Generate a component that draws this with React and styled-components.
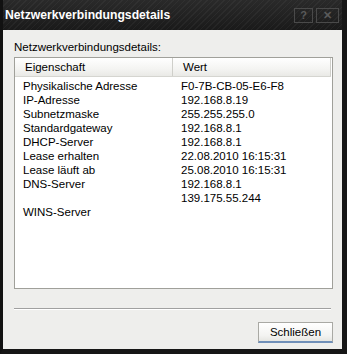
import React from "react";
import styled, { createGlobalStyle } from "styled-components";

const rows = [
  ["Physikalische Adresse", "F0-7B-CB-05-E6-F8"],
  ["IP-Adresse", "192.168.8.19"],
  ["Subnetzmaske", "255.255.255.0"],
  ["Standardgateway", "192.168.8.1"],
  ["DHCP-Server", "192.168.8.1"],
  ["Lease erhalten", "22.08.2010 16:15:31"],
  ["Lease läuft ab", "25.08.2010 16:15:31"],
  ["DNS-Server", "192.168.8.1"],
  ["", "139.175.55.244"],
  ["WINS-Server", ""],
];

const App = () => {
  return (
    <>
      <GlobalStyle />
      <Window>
        <TitleBar>
          <Title>Netzwerkverbindungsdetails</Title>
          <Caption>
            <CaptionButton>?</CaptionButton>
            <CaptionButton wide>✕</CaptionButton>
          </Caption>
        </TitleBar>
        <Body>
          <Label>Netzwerkverbindungsdetails:</Label>
          <ListBox>
            <Header>
              <HeaderCell width={158}>Eigenschaft</HeaderCell>
              <HeaderCell grow>Wert</HeaderCell>
            </Header>
            <Rows>
              {rows.map(([name, value], i) => (
                <Row key={i}>
                  <Cell width={158}>{name}</Cell>
                  <Cell>{value}</Cell>
                </Row>
              ))}
            </Rows>
          </ListBox>
          <Separator />
          <Footer>
            <Button>Schließen</Button>
          </Footer>
        </Body>
      </Window>
    </>
  );
};

const GlobalStyle = createGlobalStyle`
  html, body {
    margin: 0;
    padding: 0;
    background: #000;
  }
  body {
    font-family: "Liberation Sans", Arial, sans-serif;
  }
`;

const Window = styled.div`
  width: 347px;
  height: 354px;
  box-sizing: border-box;
  display: flex;
  flex-direction: column;
  background: #1c1c1c;
  border-left: 3px solid #111;
  border-right: 5px solid #161616;
  border-bottom: 5px solid #161616;
`;

const TitleBar = styled.div`
  height: 30px;
  flex: none;
  display: flex;
  align-items: center;
  justify-content: space-between;
  padding: 0 3px 0 2px;
  background: repeating-linear-gradient(
      135deg,
      rgba(255, 255, 255, 0.04) 0px,
      rgba(255, 255, 255, 0.04) 1px,
      transparent 1px,
      transparent 4px
    ),
    linear-gradient(180deg, #2a2a2a 0%, #1a1a1a 100%);
`;

const Title = styled.div`
  color: #fff;
  font-weight: bold;
  font-size: 12.2px;
`;

const Caption = styled.div`
  display: flex;
  gap: 3px;
`;

const CaptionButton = styled.div`
  width: ${(p) => (p.wide ? 23 : 19)}px;
  height: 15px;
  box-sizing: border-box;
  border: 1px solid #4a4a4a;
  color: #5a5a5a;
  font-size: 11px;
  font-weight: bold;
  line-height: 13px;
  text-align: center;
`;

const Body = styled.div`
  flex: 1;
  display: flex;
  flex-direction: column;
  background: #eeeeec;
  padding: 10px 9px 6px 11px;
`;

const Label = styled.div`
  font-size: 11.5px;
  color: #000;
  line-height: 14px;
  margin-bottom: 3px;
`;

const ListBox = styled.div`
  height: 232px;
  box-sizing: border-box;
  border: 1px solid #a0a09a;
  background: #fff;
  display: flex;
  flex-direction: column;
`;

const Header = styled.div`
  display: flex;
  height: 18px;
  margin-right: 1px;
  border-bottom: 1px solid #d5d5d0;
  background: linear-gradient(180deg, #ffffff 0%, #f4f4f2 60%, #e9e9e6 100%);
`;

const HeaderCell = styled.div`
  width: ${(p) => (p.width ? `${p.width}px` : "auto")};
  flex: ${(p) => (p.grow ? 1 : "none")};
  box-sizing: border-box;
  padding-left: 10px;
  font-size: 11.5px;
  line-height: 18px;
  border-right: 1px solid #cfcfca;
`;

const Rows = styled.div`
  padding-top: 2px;
`;

const Row = styled.div`
  display: flex;
  height: 14px;
  font-size: 11.5px;
  line-height: 14px;
`;

const Cell = styled.div`
  width: ${(p) => (p.width ? `${p.width}px` : "auto")};
  flex: none;
  padding-left: 8px;
  box-sizing: border-box;
  white-space: nowrap;
`;

const Separator = styled.div`
  margin-top: 19px;
  height: 1px;
  background: #a0a0a0;
  border-bottom: 1px solid #fff;
  margin-right: 2px;
`;

const Footer = styled.div`
  display: flex;
  justify-content: flex-end;
  margin-top: 12px;
`;

const Button = styled.div`
  width: 75px;
  height: 21px;
  box-sizing: border-box;
  border: 1px solid #a9a9a4;
  border-bottom: 2px solid #6f8fb8;
  background: linear-gradient(180deg, #ffffff 0%, #f3f3f1 70%, #e6e6e2 100%);
  font-size: 11.5px;
  line-height: 18px;
  text-align: center;
  color: #000;
`;

export default App;
